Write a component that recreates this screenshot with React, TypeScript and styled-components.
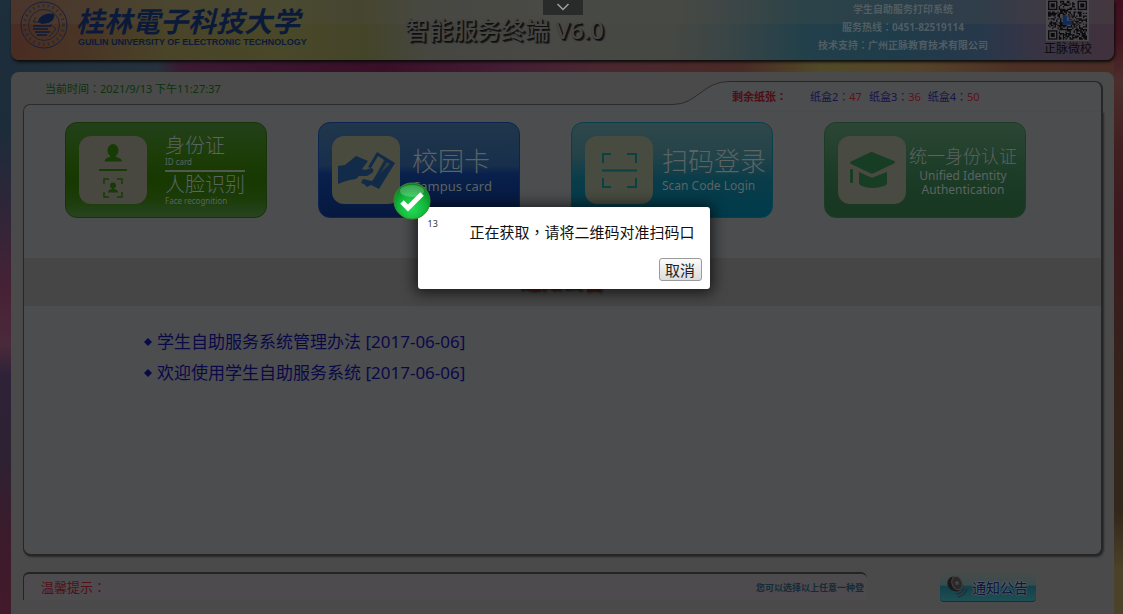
import React from "react";
import styled, { createGlobalStyle } from "styled-components";

const GlobalStyle = createGlobalStyle`
  * { box-sizing: border-box; }
  body {
    margin: 0;
    background: #2a2028;
    font-family: "Noto Sans", "Noto Sans CJK SC", sans-serif;
  }
  button { font-family: inherit; }
`;

const Page = styled.div`
  min-height: 100vh;
  display: flex;
  flex-direction: column;
  gap: 12px;
  padding: 0 9px 0 11px;
  background:
    linear-gradient(180deg, #1d2f3c 0, #1d2c3a 130px, #2f2638 210px, #472135 290px, #4a2a3a 345px, #2f2238 375px, #2c2233 450px, #3c1b2b 540px, #421a2c 100%) left / 11px 100% no-repeat,
    linear-gradient(180deg, #400f20 0, #43151f 40px, #4b2d2c 80px, #40201f 150px, #3c181f 220px, #371f1c 320px, #33261b 450px, #33261b 510px, #4b4229 570px, #4b4229 100%) right / 9px 100% no-repeat,
    linear-gradient(90deg, #1c2c3a 0, #22303c 7%, #25313c 14%, #3a1a31 16%, #390f28 34%, #431d33 45%, #4a2630 53%, #492a26 66%, #504a27 73%, #55432a 82%, #4c3025 90%, #492d26 100%);
`;

const Header = styled.header`
  height: 60px;
  display: grid;
  grid-template-columns: 380px 1fr 400px;
  border-radius: 0 0 8px 8px;
  box-shadow: 1px 2px 3px #0b0b0b;
  background:
    linear-gradient(180deg, rgba(76, 76, 70, 0.25) 0 24px, rgba(0, 0, 0, 0) 24px),
    linear-gradient(90deg, #4a2c22 0, #4a3625 7%, #4a4428 14%, #494829 25%, #444429 32%, #464741 38%, #484845 48%, #454843 60%, #394546 65%, #22404a 72%, #1f3c4a 80%, #27384b 88%, #383444 93%, #41313c 100%);
`;

const Brand = styled.div`
  display: flex;
  gap: 8px;
  padding-left: 9px;
  color: #0c1a3a;
`;

const BrandText = styled.div`
  display: flex;
  flex-direction: column;
  padding-top: 3px;
`;

const BrandName = styled.div`
  font: italic 700 28px/34px "Noto Sans CJK SC", sans-serif;
  white-space: nowrap;
`;

const BrandEnglish = styled.div`
  padding-left: 2px;
  font: 700 9px/11px "Liberation Sans", sans-serif;
  white-space: nowrap;
`;

const Title = styled.h1`
  margin: 0;
  padding: 12px 0 0 14px;
  font-size: 24px;
  line-height: 36px;
  font-weight: 500;
  color: #454543;
  text-shadow: 1px 1px 1px #0d0d0d, 2px 2px 1px #1a1a1a;
  white-space: nowrap;
`;

const HeaderSide = styled.div`
  display: flex;
  justify-content: flex-end;
  gap: 56px;
  padding-right: 22px;
`;

const Contact = styled.div`
  font-size: 10px;
  line-height: 18px;
  font-weight: 700;
  text-align: center;
  color: #515d63;
  white-space: nowrap;
`;

const QrBlock = styled.div`
  display: flex;
  flex-direction: column;
  align-items: center;
  font-size: 12px;
  line-height: 15px;
  color: #0b0b0d;
  white-space: nowrap;
`;

/* Full-width punctuation set in the middle of its cell */
const Mark = styled.span`
  font-family: "Noto Sans CJK TC", sans-serif;
`;

const Main = styled.main`
  flex: 1;
  display: flex;
  flex-direction: column;
  padding: 9px 11px 0 12px;
  background: #4a4a4a;
  border-radius: 8px 8px 0 0;
`;

const TabRow = styled.div`
  display: flex;
  height: 31px;
  svg { display: block; }
`;

const ClockSide = styled.div`
  flex: 1;
  display: flex;
  flex-direction: column;
`;

const Clock = styled.time`
  height: 23px;
  padding-left: 22px;
  font-size: 11px;
  line-height: 14px;
  color: #0a330b;
`;

const Edge = styled.div`
  flex: 1;
  border: solid #2c2c2c;
  border-width: 1px 0 0 1px;
  border-radius: 7px 0 0 0;
  background: #4c4d4f;
`;

const Paper = styled.div`
  display: flex;
  width: 374px;
  gap: 7px;
  padding-left: 3px;
  font-size: 11px;
  line-height: 28px;
  background: #4c4d4f;
  border: solid #262626;
  border-width: 1px 2px 0 0;
  border-radius: 0 8px 0 0;
  color: #151348;
  white-space: nowrap;
  b { width: 71px; color: #500c12; }
  em { font-style: normal; color: #5e1017; }
`;

const Body = styled.section`
  flex: 1;
  background: #4c4d4f;
  border: solid #262626;
  border-width: 0 2px 2px 1px;
  border-radius: 0 0 8px 8px;
  box-shadow: 1px 1px 2px #2a2a2a;
`;

const Cards = styled.div`
  display: flex;
  justify-content: space-between;
  padding: 10px 75px 40px 41px;
`;

const Card = styled.button<{ $bg: string; $line: string; $gap: number }>`
  width: 202px;
  height: 96px;
  display: flex;
  align-items: center;
  gap: ${(p) => p.$gap}px;
  padding: 0 0 0 13px;
  border: 1px solid ${(p) => p.$line};
  border-radius: 12px;
  background: ${(p) => p.$bg};
  color: #5b6363;
  text-align: left;
  white-space: nowrap;
`;

const Tile = styled.span<{ $bg: string }>`
  flex: none;
  width: 68px;
  height: 68px;
  border-radius: 12px;
  background: ${(p) => p.$bg};
  svg { display: block; }
`;

const Label = styled.span<{ $center?: boolean }>`
  display: flex;
  flex-direction: column;
  text-align: ${(p) => (p.$center ? "center" : "left")};
`;

const Big = styled.span<{ $size: number; $line: number }>`
  font-size: ${(p) => p.$size}px;
  line-height: ${(p) => p.$line}px;
  font-weight: 300;
`;

const Small = styled.span<{ $size: number; $line: number }>`
  font-size: ${(p) => p.$size}px;
  line-height: ${(p) => p.$line}px;
`;

const Rule = styled.span`
  height: 2px;
  margin: 3px 0 2px;
  background: #505850;
`;

const Band = styled.h2`
  margin: 0;
  height: 48px;
  font-size: 21px;
  line-height: 47px;
  text-align: center;
  background: #464646;
  color: #4c1a10;
  text-shadow: 1px 1px 2px #222;
`;

const Notices = styled.ul`
  list-style: none;
  margin: 0;
  padding: 20px 0 0 120px;
  font-size: 17px;
  line-height: 31px;
`;

const Notice = styled.li`
  display: flex;
  align-items: center;
  gap: 5px;
  a { color: #0a0948; text-decoration: none; }
`;

const Footer = styled.footer`
  display: flex;
  align-items: flex-start;
  justify-content: space-between;
  height: 58px;
  padding: 16px 67px 0 0;
`;

const Tip = styled.div`
  width: 844px;
  height: 28px;
  display: flex;
  justify-content: space-between;
  padding: 0 3px 0 17px;
  border: solid #242424;
  border-width: 2px 0 0 1px;
  border-radius: 6px 6px 0 0;
  background: #4e4b4e;
  font-size: 13px;
  line-height: 25px;
  color: #4f1115;
`;

const TipText = styled.span`
  font-size: 9px;
  line-height: 27px;
  font-weight: 700;
  color: #142a37;
`;

const NoticeButton = styled.button`
  width: 96px;
  height: 30px;
  display: flex;
  align-items: center;
  gap: 4px;
  padding: 0 0 0 6px;
  border: 0;
  border-bottom: 1px solid #123036;
  border-radius: 4px;
  background: linear-gradient(180deg, #484b4b 0, #3a4b4c 45%, #12414a 50%, #1f4f54 100%);
  font-size: 14px;
  font-weight: 500;
  color: #15163a;
  text-shadow: 0 0 2px #6d7478, 0 0 1px #6d7478;
  white-space: nowrap;
`;

const PullDown = styled.button`
  position: absolute;
  top: 0;
  left: calc(50% - 19px);
  width: 40px;
  height: 15px;
  padding: 0;
  border: 0;
  background: #292a2a;
  svg { display: block; margin: 0 auto; }
`;

const Overlay = styled.div`
  position: absolute;
  inset: 0;
  display: flex;
  justify-content: center;
  align-items: flex-start;
  padding: 207px 0 0 4px;
`;

const Dialog = styled.div`
  position: relative;
  width: 292px;
  display: flex;
  flex-direction: column;
  padding: 10px 8px 8px 10px;
  background: #fff;
  border-radius: 3px;
  box-shadow: 0 1px 14px 3px rgba(0, 0, 0, 0.65);
`;

const DialogLine = styled.div`
  display: flex;
  justify-content: space-between;
  padding-right: 7px;
  line-height: 30px;
  font-size: 15px;
  color: #111;
  small { font-size: 9px; line-height: 14px; color: #333; }
`;

const Cancel = styled.button`
  align-self: flex-end;
  width: 43px;
  height: 23px;
  margin-top: 11px;
  padding: 0;
  border: 1px solid #9b9b9b;
  border-radius: 3px;
  background: linear-gradient(#fbfbfb, #dcdcdc);
  font-size: 15px;
  line-height: 20px;
  color: #222;
`;

const Badge = styled.svg`
  position: absolute;
  left: -25px;
  top: -25px;
`;

function Seal() {
  return (
    <svg width="48" height="50" viewBox="0 0 48 50" fill="none" stroke="#14203a">
      <circle cx="24" cy="25" r="23" />
      <circle cx="24" cy="25" r="15.5" strokeWidth=".8" />
      <circle cx="24" cy="25" r="19.5" strokeWidth="3" strokeDasharray="1.5 3.5" opacity=".55" />
      <path d="M18 22c1-6 8-10 16-8 1 4-2 8-6 9l-6 1z" fill="#0c1a3a" stroke="none" />
      <path d="M13 26h18M13 29h15M15 32h15M17 35h10" strokeWidth="1.6" stroke="#0c1a3a" />
      <path d="M16 17l-3 5h7M30 24l6 5-7 8" strokeWidth=".9" />
    </svg>
  );
}

const N = 29;

function qrPath() {
  let d = "";
  let seed = 41;
  for (let y = 0; y < N; y++) {
    for (let x = 0; x < N; x++) {
      seed = (seed * 1103515245 + 12345) % 2147483648;
      const corner = (x < 8 && y < 8) || (x > N - 9 && y < 8) || (x < 8 && y > N - 9);
      const middle = x > 10 && x < 18 && y > 10 && y < 18;
      if (!corner && !middle && seed / 2147483648 > 0.48) d += `M${x} ${y}h1v1h-1z`;
    }
  }
  return d;
}

function QrCode() {
  return (
    <svg width="43" height="41" viewBox="-1.5 -.5 32 30.5">
      <rect x="-2" y="-2" width="34" height="33" fill="#4b494d" />
      <path d={qrPath()} fill="#0b0b0d" />
      {[[0, 0], [N - 7, 0], [0, N - 7]].map(([x, y]) => (
        <g key={`${x}-${y}`} fill="#0b0b0d">
          <rect x={x + 0.5} y={y + 0.5} width="6" height="6" fill="none" stroke="#0b0b0d" />
          <rect x={x + 2} y={y + 2} width="3" height="3" />
        </g>
      ))}
      <path d="M11 11h3v4h4v3h-7z" fill="#0e2c57" />
      <path d="M14.500 11.500h1.500v2.500h2" stroke="#0e2c57" fill="none" />
      <rect x="16.500" y="11" width="1.500" height="1.500" fill="#5b1a18" />
    </svg>
  );
}

function IdIcon() {
  return (
    <svg width="68" height="68" fill="#173b04">
      <ellipse cx="34" cy="14.500" rx="5.500" ry="6.500" />
      <path d="M31 18h6v3c4 1 6 2 6 4.500H25.500c0-2.500 2-3.500 5.500-4.500z" />
      <rect x="20" y="33" width="28" height="2" />
      <path d="M30 43h-5v5M38 43h5v5M30 61h-5v-5M38 61h5v-5" fill="none" stroke="#173b04" strokeWidth="1.500" />
      <circle cx="34" cy="49.500" r="3" />
      <path d="M33 51h2v2c3 .5 4 1.500 4 3.500H29c0-2 1-3 4-3.500z" />
    </svg>
  );
}

function CampusIcon() {
  return (
    <svg width="68" height="68" fill="#122b48">
      <path d="M6 30l7-1 11-9 12 5-6 8 3 1 6-2c3 0 3 4 1 5l-5 3-8 0-3 3-6 1-7 2-5 2H6z" />
      <path d="M45 16l18 11-16 26-8-4-4 2-3-3-3-1 2-4 9 2L58 28l-12-8-7 12-3-1z" />
      <path d="M53 22l-13 24 5 3 14-23z" opacity=".4" />
      <path d="M55 23L41 47" stroke="#122b48" strokeWidth="2.500" />
    </svg>
  );
}

function ScanIcon() {
  return (
    <svg width="68" height="68" fill="none" stroke="#0b4142" strokeWidth="2">
      <path d="M18 27v-9h8M42 18h9v9M18 42v9h8M42 51h9v-9M17 34.500h35" />
    </svg>
  );
}

function CapIcon() {
  return (
    <svg width="68" height="68" fill="#173d25">
      <path d="M34 16l22 9q2 1 0 2.500L36 37q-2 1-4 0L13 28q-2-1 0-2.500l19-9q1-.8 2-.5z" />
      <path d="M21 36l11 5q2 1 4 0l13-5v11q0 2-3 3-12 4-22 0-3-1-3-3z" />
      <rect x="12" y="33" width="3" height="14" rx="1" />
    </svg>
  );
}

function Speaker() {
  return (
    <svg width="22" height="24" viewBox="0 0 22 24" fill="none">
      <ellipse cx="9" cy="9" rx="8" ry="7" transform="rotate(40 9 9)" fill="#1b191a" />
      <ellipse cx="11" cy="8" rx="5" ry="7" transform="rotate(-20 11 8)" fill="#2b2829" stroke="#454243" />
      <circle cx="11" cy="8" r="2" fill="#454141" />
      <path d="M10 19q6 0 8-6M12 22q7-2 9-8" stroke="#252a31" strokeWidth="1.200" />
    </svg>
  );
}

const papers = [["2", "47"], ["3", "36"], ["4", "50"]];
const notices = ["学生自助服务系统管理办法 [2017-06-06]", "欢迎使用学生自助服务系统 [2017-06-06]"];

export default function App() {
  return (
    <>
      <GlobalStyle />
      <Page>
        <Header>
          <Brand>
            <Seal />
            <BrandText>
              <BrandName>桂林電子科技大学</BrandName>
              <BrandEnglish>GUILIN UNIVERSITY OF ELECTRONIC TECHNOLOGY</BrandEnglish>
            </BrandText>
          </Brand>
          <Title>智能服务终端 V6.0</Title>
          <HeaderSide>
            <Contact>
              <div>学生自助服务打印系统</div>
              <div>服务热线<Mark>：</Mark>0451-82519114</div>
              <div>技术支持<Mark>：</Mark>广州正脉教育技术有限公司</div>
            </Contact>
            <QrBlock>
              <QrCode />
              <span>正脉微校</span>
            </QrBlock>
          </HeaderSide>
        </Header>
        <Main>
          <TabRow>
            <ClockSide>
              <Clock>当前时间<Mark>：</Mark>2021/9/13 下午11:27:37</Clock>
              <Edge />
            </ClockSide>
            <svg width="56" height="31" fill="none">
              <path d="M0 23.500C24 23.500 30 .5 56 .5V31H0z" fill="#4c4d4f" />
              <path d="M0 23.500C24 23.500 30 .5 56 .5" stroke="#2c2c2c" />
            </svg>
            <Paper>
              <b>剩余纸张<Mark>：</Mark></b>
              {papers.map(([box, left]) => (
                <span key={box}>
                  纸盒{box}<Mark>：</Mark><em>{left}</em>
                </span>
              ))}
            </Paper>
          </TabRow>
          <Body>
            <Cards>
              <Card $gap={18} $line="#16330a" $bg="linear-gradient(#23401a, #1c3d08 35%, #173800 60%, #1b3c08 80%, #284420)">
                <Tile $bg="#494840"><IdIcon /></Tile>
                <Label>
                  <Big $size={20} $line={22}>身份证</Big>
                  <Small $size={8} $line={10}>ID card</Small>
                  <Rule />
                  <Big $size={20} $line={22}>人脸识别</Big>
                  <Small $size={8} $line={10}>Face recognition</Small>
                </Label>
              </Card>
              <Card $gap={12} $line="#0c2450" $bg="linear-gradient(#20364a, #182f4d 45%, #08204b 55%, #06183f)">
                <Tile $bg="#4a4b3f"><CampusIcon /></Tile>
                <Label>
                  <Big $size={26} $line={31}>校园卡</Big>
                  <Small $size={13} $line={18}>Campus card</Small>
                </Label>
              </Card>
              <Card $gap={9} $line="#07404c" $bg="linear-gradient(#30474b, #234349 35%, #0a3c49 60%, #003b4b)">
                <Tile $bg="#484b40"><ScanIcon /></Tile>
                <Label>
                  <Big $size={26} $line={31}>扫码登录</Big>
                  <Small $size={12} $line={18}>Scan Code Login</Small>
                </Label>
              </Card>
              <Card $gap={3} $line="#1d3c28" $bg="linear-gradient(#2c4634, #203f2b 40%, #1a3924 75%, #193822)">
                <Tile $bg="#494a42"><CapIcon /></Tile>
                <Label $center>
                  <Big $size={18} $line={26}>统一身份认证</Big>
                  <Small $size={12} $line={14}>Unified Identity</Small>
                  <Small $size={12} $line={14}>Authentication</Small>
                </Label>
              </Card>
            </Cards>
            <Band>通知公告</Band>
            <Notices>
              {notices.map((text) => (
                <Notice key={text}>
                  <svg width="8" height="8" fill="#0a0948"><path d="M4 0l4 4-4 4-4-4z" /></svg>
                  <a href="#notice">{text}</a>
                </Notice>
              ))}
            </Notices>
          </Body>
          <Footer>
            <Tip>
              <span>温馨提示<Mark>：</Mark></span>
              <TipText>您可以选择以上任意一种登</TipText>
            </Tip>
            <NoticeButton>
              <Speaker />
              通知公告
            </NoticeButton>
          </Footer>
        </Main>
      </Page>
      <Overlay>
        <Dialog role="dialog" aria-modal="true" aria-labelledby="scan-message">
          <DialogLine>
            <small>13</small>
            <span id="scan-message">正在获取<Mark>，</Mark>请将二维码对准扫码口</span>
          </DialogLine>
          <Cancel>取消</Cancel>
          <Badge width="38" height="38" viewBox="0 0 38 38">
            <defs>
              <radialGradient id="ball" cx=".5" cy=".7" r=".65">
                <stop offset="0" stopColor="#27dd58" />
                <stop offset=".6" stopColor="#0fb63a" />
                <stop offset="1" stopColor="#0a8524" />
              </radialGradient>
            </defs>
            <circle cx="19" cy="19" r="18" fill="url(#ball)" stroke="#3f8a2c" />
            <ellipse cx="19" cy="9" rx="12" ry="6" fill="#fff" opacity=".22" />
            <path d="M9 20l6 6 14-14" fill="none" stroke="#fff" strokeWidth="5" />
          </Badge>
        </Dialog>
      </Overlay>
      <PullDown aria-label="展开">
        <svg width="14" height="11" fill="none" stroke="#a0a0a0" strokeWidth="1.500">
          <path d="M1.500 2L7 7.500 12.500 2" />
        </svg>
      </PullDown>
    </>
  );
}
